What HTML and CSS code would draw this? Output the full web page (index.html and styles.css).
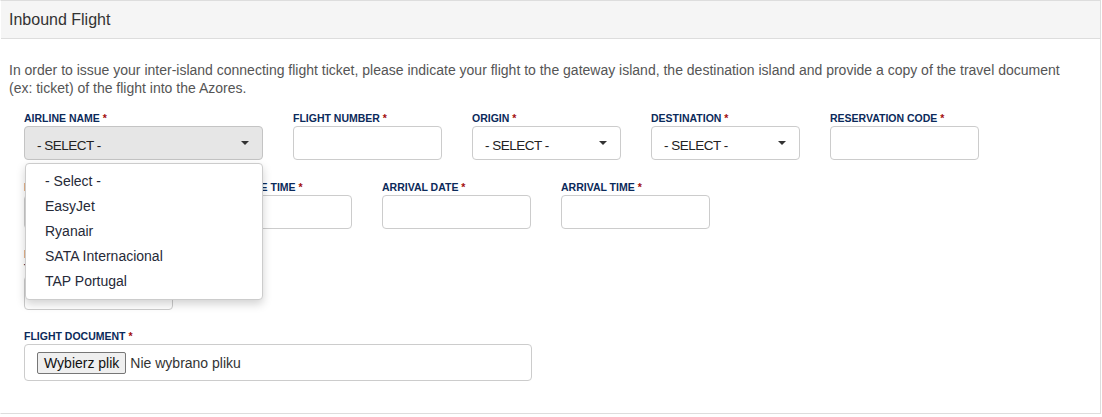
FILE: index.html
```html
<!DOCTYPE html>
<html lang="en">
<head>
<meta charset="utf-8">
<title>Inbound Flight</title>
<link rel="stylesheet" href="styles.css">
</head>
<body>
<section class="panel">
  <header class="panel-heading">Inbound Flight</header>
  <div class="panel-body">
    <p class="intro">In order to issue your inter-island connecting flight ticket, please indicate your flight to the gateway island, the destination island and provide a copy of the travel document (ex: ticket) of the flight into the Azores.</p>
    <div class="form">
      <div class="row row-first">
        <div class="field field-wide has-menu">
          <label class="lbl">Airline name <span class="req">*</span></label>
          <div class="select is-open"><span class="select-text">- Select -</span><span class="caret"></span></div>
          <ul class="menu">
            <li>- Select -</li>
            <li>EasyJet</li>
            <li>Ryanair</li>
            <li>SATA Internacional</li>
            <li>TAP Portugal</li>
          </ul>
        </div>
        <div class="field">
          <label class="lbl">Flight number <span class="req">*</span></label>
          <div class="input"></div>
        </div>
        <div class="field">
          <label class="lbl">Origin <span class="req">*</span></label>
          <div class="select"><span class="select-text">- Select -</span><span class="caret"></span></div>
        </div>
        <div class="field">
          <label class="lbl">Destination <span class="req">*</span></label>
          <div class="select"><span class="select-text">- Select -</span><span class="caret"></span></div>
        </div>
        <div class="field">
          <label class="lbl">Reservation code <span class="req">*</span></label>
          <div class="input"></div>
        </div>
      </div>
      <div class="row">
        <div class="field">
          <label class="lbl">Departure date <span class="req">*</span></label>
          <div class="input"></div>
        </div>
        <div class="field">
          <label class="lbl">Departure time <span class="req">*</span></label>
          <div class="input"></div>
        </div>
        <div class="field">
          <label class="lbl">Arrival date <span class="req">*</span></label>
          <div class="input"></div>
        </div>
        <div class="field">
          <label class="lbl">Arrival time <span class="req">*</span></label>
          <div class="input"></div>
        </div>
      </div>
      <div class="row row-third">
        <div class="field">
          <label class="lbl">Luggage checked through all the way <span class="req">*</span></label>
          <div class="select"><span class="select-text">- Select -</span><span class="caret"></span></div>
        </div>
      </div>
      <div class="row">
        <div class="field field-file">
          <label class="lbl">Flight document <span class="req">*</span></label>
          <div class="file"><span class="file-btn">Wybierz plik</span><span class="file-name">Nie wybrano pliku</span></div>
        </div>
      </div>
    </div>
  </div>
</section>
</body>
</html>
```
FILE: styles.css
```css
html, body {
  margin: 0;
  padding: 0;
  background: #fff;
}
body {
  font-family: "Liberation Sans", Arial, sans-serif;
  color: #333;
}
.panel {
  box-sizing: border-box;
  width: 1101px;
  height: 414px;
  border: 1px solid #ddd;
  border-left-color: #fff;
}
.panel-heading {
  height: 37px;
  line-height: 37px;
  background: #f5f5f5;
  border-bottom: 1px solid #ddd;
  padding-left: 8px;
  font-size: 16px;
  color: #333;
}
.panel-body {
  padding: 0 8px;
}
.intro {
  margin: 22px 20px 14px 0;
  font-size: 14px;
  line-height: 18px;
  color: #555;
}
.form {
  padding-left: 15px;
}
.row {
  display: flex;
  gap: 30px;
  margin-bottom: 18px;
}
.row-first {
  margin-bottom: 20px;
}
.row-third {
  margin-bottom: 19px;
}
.field {
  width: 149px;
  display: flex;
  flex-direction: column;
  justify-content: flex-end;
}
.field-wide {
  width: 239px;
}
.field-file {
  width: 508px;
}
.has-menu {
  position: relative;
}
.lbl {
  display: block;
  font-size: 10.5px;
  line-height: 14px;
  font-weight: bold;
  text-transform: uppercase;
  color: #0b2a5a;
  margin-bottom: 1px;
}
.req {
  color: #a30d0d;
}
.input, .select {
  box-sizing: border-box;
  height: 34px;
  border: 1px solid #ccc;
  border-radius: 4px;
  background: #fff;
}
.select {
  display: flex;
  align-items: center;
  justify-content: space-between;
  padding: 5px 13px 0 12px;
  font-size: 13.5px;
  letter-spacing: -0.5px;
  text-transform: uppercase;
  color: #222;
}
.select.is-open {
  background: #e6e6e6;
  border-color: #c4c4c4;
}
.caret {
  width: 0;
  height: 0;
  border-left: 4px solid transparent;
  border-right: 4px solid transparent;
  border-top: 4px solid #333;
  margin-top: -6px;
}
.menu {
  position: absolute;
  top: 100%;
  left: 1px;
  margin: 3px 0 0;
  width: 238px;
  box-sizing: border-box;
  list-style: none;
  padding: 5px 0;
  background: #fff;
  border: 1px solid #ccc;
  border-radius: 4px;
  box-shadow: 0 4px 10px rgba(0, 0, 0, 0.18);
  z-index: 5;
}
.menu li {
  padding-left: 19px;
  font-size: 14px;
  line-height: 25px;
  color: #262a38;
}
.file {
  box-sizing: border-box;
  height: 37px;
  border: 1px solid #ccc;
  border-radius: 4px;
  display: flex;
  align-items: center;
  padding-left: 12px;
  font-size: 14px;
  color: #333;
}
.file-btn {
  box-sizing: border-box;
  height: 22px;
  line-height: 20px;
  padding: 0 6px;
  background: #efefef;
  border: 1px solid #767676;
  border-radius: 2px;
  color: #111;
  margin-right: 4px;
}
```
